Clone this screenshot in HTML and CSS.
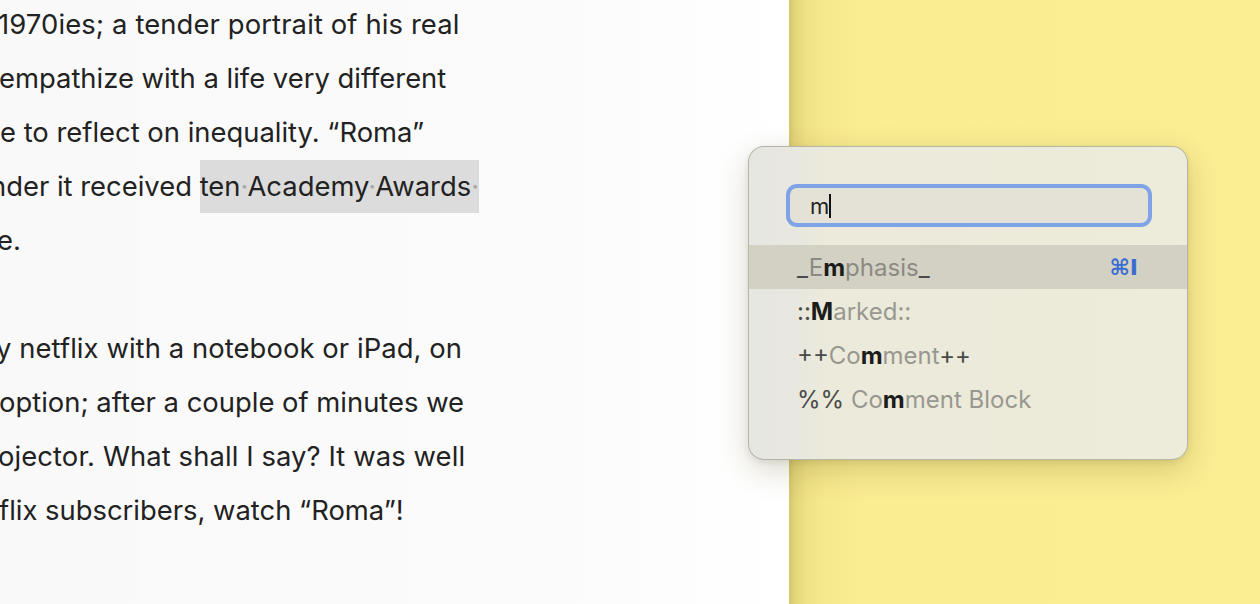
FILE: index.html
```html
<!DOCTYPE html>
<html lang="en">
<head>
<meta charset="utf-8">
<title>Editor</title>
<link rel="stylesheet" href="styles.css">
</head>
<body>
<div class="app">
  <main class="editor">
    <div class="text">
      <div class="line l1">1970ies; a tender portrait of his real</div>
      <div class="line l2">empathize with a life very different</div>
      <div class="line l3">e to reflect on inequality. “Roma”</div>
      <div class="line l4">nder it received <span class="sel">ten<span class="ws">·</span>Academy<span class="ws">·</span>Awards<span class="ws">·</span></span></div>
      <div class="line l5">e.</div>
      <div class="line blank">&nbsp;</div>
      <div class="line l7">y netflix with a notebook or iPad, on</div>
      <div class="line l8">option; after a couple of minutes we</div>
      <div class="line l9">ojector. What shall I say? It was well</div>
      <div class="line l10">flix subscribers, watch “Roma”!</div>
    </div>
  </main>
  <aside class="sidebar"></aside>

  <div class="popup">
    <div class="field"><span class="typed">m</span><span class="caret"></span></div>
    <ul class="list">
      <li class="item active"><span class="label"><span class="mk">_</span><span class="dim">E</span><b>m</b><span class="dim">phasis</span><span class="mk">_</span></span><span class="key">⌘I</span></li>
      <li class="item"><span class="label"><span class="mk">::</span><b>M</b><span class="dim">arked::</span></span></li>
      <li class="item"><span class="label"><span class="mk">++</span><span class="dim">Co</span><b>m</b><span class="dim">ment</span><span class="mk">++</span></span></li>
      <li class="item"><span class="label"><span class="mk">%%</span><span class="dim"> Co</span><b>m</b><span class="dim">ment Block</span></span></li>
    </ul>
  </div>
</div>
</body>
</html>
```

FILE: styles.css
```css
* { box-sizing: border-box; }
html, body { margin: 0; padding: 0; }
body {
  width: 1260px;
  height: 604px;
  overflow: hidden;
  font-family: Inter, "Noto Sans", "DejaVu Sans", sans-serif;
}
.app {
  position: relative;
  display: flex;
  width: 1260px;
  height: 604px;
}
.editor {
  width: 789px;
  flex: 0 0 789px;
  overflow: hidden;
  background: linear-gradient(to right, #f9f9f9 0%, #fbfbfb 70%, #ffffff 100%);
}
.text {
  margin-top: -3px;
  color: #222222;
  font-size: 27.4px;
  line-height: 54px;
}
.line { white-space: nowrap; height: 54px; }
.l1 { margin-left: -2px; letter-spacing: 0.12px; }
.l2 { margin-left: -1px; }
.l3 { margin-left: 0; }
.l4 { margin-left: -10px; }
.l5 { margin-left: -3px; }
.l7 { margin-left: -4px; letter-spacing: 0.08px; }
.l8 { margin-left: -1px; }
.l9 { margin-left: -2px; letter-spacing: 0.1px; }
.l10 { margin-left: -1px; }
.sel {
  background: #dcdcdc;
  display: inline-block;
  line-height: 53px;
}
.ws { color: #a8a8a8; }

.sidebar {
  flex: 1;
  background: linear-gradient(to right, #d3c56b 0px, #e3d57a 6px, #efe185 18px, #f6e88c 36px, #f9ec91 70px, #faed92 100%);
}

.popup {
  position: absolute;
  left: 748px;
  top: 146px;
  width: 440px;
  height: 314px;
  border-radius: 16px;
  border: 1px solid rgba(120, 118, 100, 0.45);
  background: linear-gradient(to right, #e6e6e2 0px, #e8e7e0 40px, #ebeadb 80px, #edecda 100%);
  box-shadow: 0 10px 30px rgba(90, 80, 20, 0.22), 0 2px 6px rgba(0, 0, 0, 0.08);
  padding-top: 37px;
}
.field {
  margin-left: 37px;
  width: 366px;
  height: 43px;
  border-radius: 11px;
  border: 4px solid #7ea3e6;
  background: #e4e2d6;
  display: flex;
  align-items: center;
  padding-left: 20px;
  font-size: 22px;
  color: #222;
}
.caret {
  display: inline-block;
  width: 2px;
  height: 24px;
  background: #111;
}
.list {
  list-style: none;
  margin: 18px 0 0 0;
  padding: 0;
}
.item {
  height: 44px;
  display: flex;
  align-items: center;
  justify-content: space-between;
  padding: 0 47px 0 48px;
  font-size: 24px;
  color: #9a9890;
}
.item.active { background: #d3d1c4; }
.mk { color: #4a4a48; }
.dim { color: #999890; }
.item b { color: #1c1c1a; font-weight: 700; }
.item.active .dim { color: #8c8a82; }
.key {
  color: #3b6dd1;
  font-weight: 600;
  font-family: "DejaVu Sans", Inter, sans-serif;
  font-size: 22px;
  margin-right: 2px;
}
```
